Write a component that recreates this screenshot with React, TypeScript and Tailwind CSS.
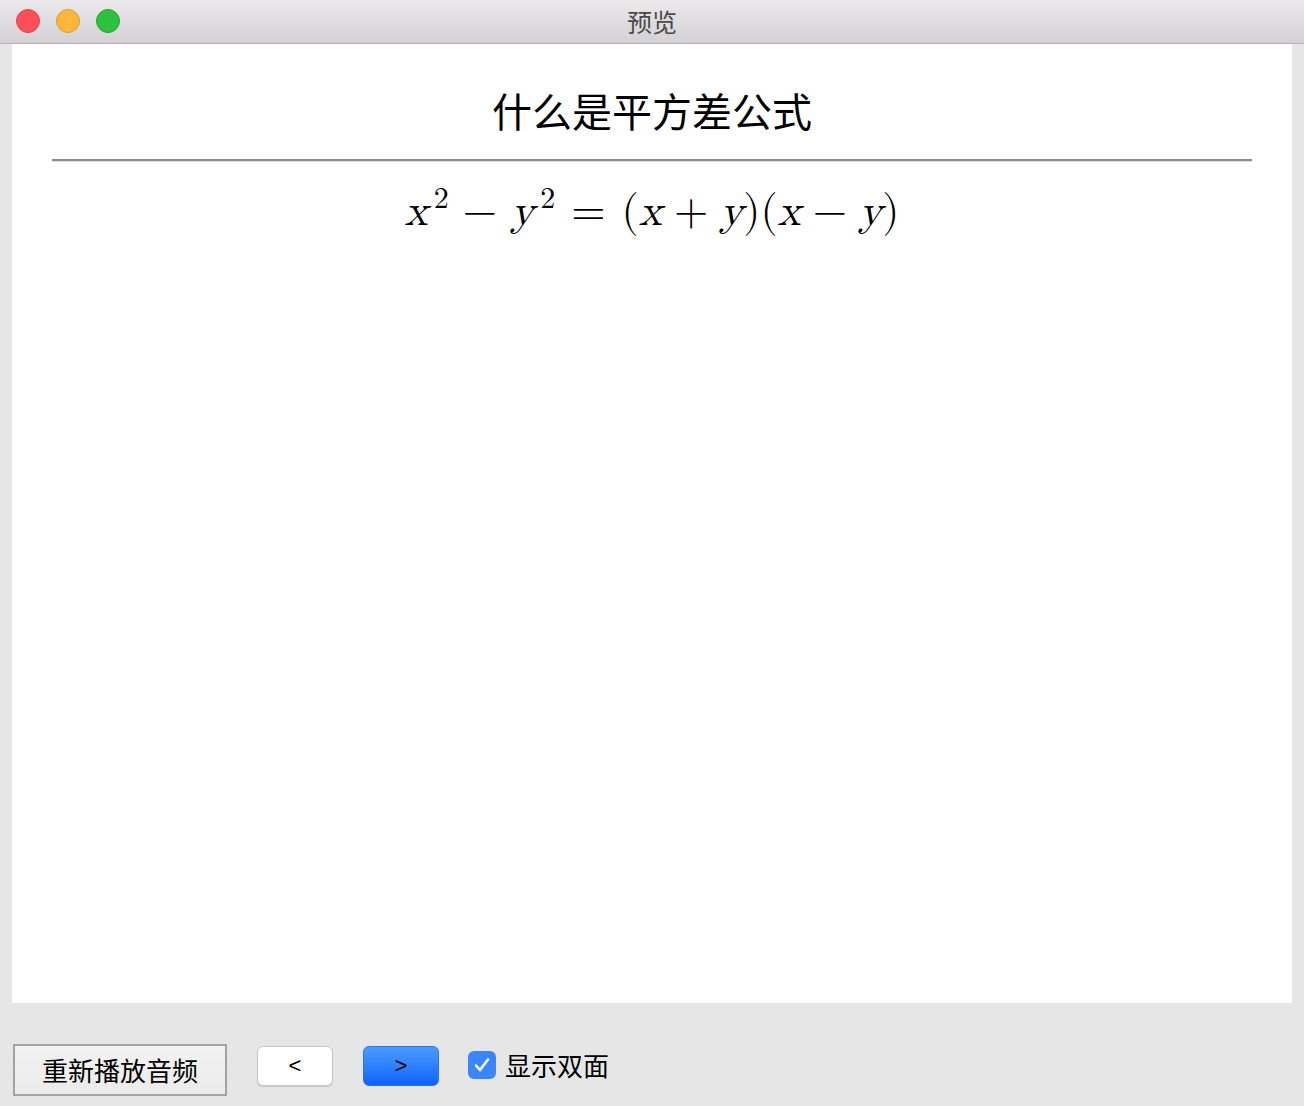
import React from 'react';

const serif = { fontFamily: '"Latin Modern Math", "DejaVu Serif", "Liberation Serif", serif' };

const Mi: React.FC<{ children: React.ReactNode }> = ({ children }) => (
  <span className="italic">{children}</span>
);

const Sup: React.FC<{ children: React.ReactNode }> = ({ children }) => (
  <span className="text-[30px] relative -top-[17px] ml-[6px]">{children}</span>
);

const App: React.FC = () => {
  return (
    <div className="w-[1304px] h-[1106px] bg-[#e6e6e6] flex flex-col overflow-hidden font-['Noto_Sans_CJK_SC',sans-serif]">
      {/* title bar */}
      <div className="relative h-[44px] shrink-0 bg-gradient-to-b from-[#ebe9eb] to-[#d3d1d3] border-b border-[#b3b1b3] flex items-center justify-center">
        <div className="absolute left-[16px] top-[9px] flex gap-[16px]">
          <div className="w-[24px] h-[24px] rounded-full bg-[#fd4f57] border border-[#e1414a]" />
          <div className="w-[24px] h-[24px] rounded-full bg-[#fdb63a] border border-[#de9d2c]" />
          <div className="w-[24px] h-[24px] rounded-full bg-[#2cc23f] border border-[#22a632]" />
        </div>
        <span className="text-[25px] text-[#4a4a4a] leading-none">预览</span>
      </div>

      {/* content */}
      <div className="mx-[12px] h-[959px] bg-white flex flex-col items-center">
        <h1 className="mt-[46px] text-[40px] leading-none text-black">什么是平方差公式</h1>
        <div className="mt-[29px] w-[1200px] border-t-2 border-[#8c8c8c] border-b border-b-[#e2e2e2]" />
        <div className="mt-[28px] text-[44px] leading-none text-black flex items-baseline" style={serif}>
          <Mi>x</Mi>
          <Sup>2</Sup>
          <span className="mx-[14px]">−</span>
          <Mi>y</Mi>
          <Sup>2</Sup>
          <span className="mx-[16px]">=</span>
          <span>(</span>
          <Mi>x</Mi>
          <span className="mx-[12px]">+</span>
          <Mi>y</Mi>
          <span>)(</span>
          <Mi>x</Mi>
          <span className="mx-[12px]">−</span>
          <Mi>y</Mi>
          <span>)</span>
        </div>
      </div>

      {/* bottom bar */}
      <div className="flex-1 flex items-end pb-[10px] pl-[13px]">
        <div className="flex items-start">
          <button className="w-[214px] h-[52px] border-2 border-[#a3a3a3] bg-gradient-to-b from-[#f2f2f2] to-[#ebebeb] text-[26px] leading-none text-black flex items-center justify-center">
            重新播放音频
          </button>
          <button className="mt-[2px] ml-[30px] w-[76px] h-[40px] rounded-[6px] bg-white border border-[#c6c6c6] shadow-[0_1px_1px_rgba(0,0,0,0.15)] text-[22px] leading-none text-black flex items-center justify-center font-['Liberation_Sans',sans-serif]">
            &lt;
          </button>
          <button className="mt-[2px] ml-[30px] w-[76px] h-[40px] rounded-[6px] bg-gradient-to-b from-[#4c9bfe] to-[#0e62fd] border border-[#2a73f0] text-[22px] leading-none text-black flex items-center justify-center font-['Liberation_Sans',sans-serif]">
            &gt;
          </button>
          <div className="mt-[7px] ml-[29px] flex items-center">
            <div className="w-[28px] h-[28px] rounded-[6px] bg-[#3a87fc] flex items-center justify-center">
              <svg width="18" height="16" viewBox="0 0 18 16" fill="none">
                <path d="M3 8.5 L7 13 L15 2.5" stroke="white" strokeWidth="2.6" strokeLinecap="round" strokeLinejoin="round" />
              </svg>
            </div>
            <span className="ml-[9px] text-[26px] leading-none text-black">显示双面</span>
          </div>
        </div>
      </div>
    </div>
  );
};

export default App;
